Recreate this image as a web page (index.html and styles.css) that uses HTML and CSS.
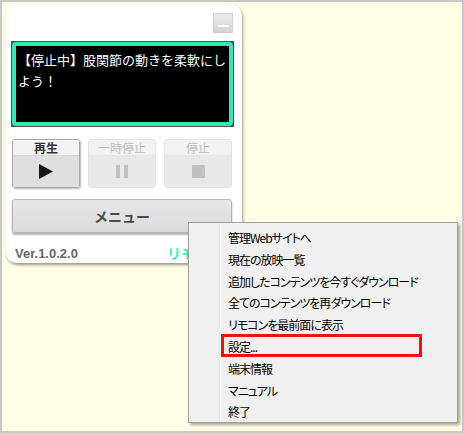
FILE: index.html
```html
<!DOCTYPE html>
<html lang="ja">
<head>
<meta charset="utf-8">
<link rel="stylesheet" href="styles.css">
</head>
<body>
<div class="screen">
  <div class="remote">
    <div class="titlebar">
      <div class="min-btn"><span class="min-bar"></span></div>
    </div>
    <div class="display">
      <div class="display-inner">【停止中】股関節の動きを柔軟にしよう！</div>
    </div>
    <div class="controls">
      <div class="ctl ctl-on">
        <div class="ctl-label">再生</div>
        <div class="ctl-icon">
          <svg width="14" height="15" viewBox="0 0 14 15"><polygon points="0,0 14,7.5 0,15" fill="#161616"/></svg>
        </div>
      </div>
      <div class="ctl ctl-off">
        <div class="ctl-label">一時停止</div>
        <div class="ctl-icon">
          <svg width="12" height="13" viewBox="0 0 12 13"><rect x="0" y="0" width="4" height="13" fill="#c0c0c0"/><rect x="8" y="0" width="4" height="13" fill="#c0c0c0"/></svg>
        </div>
      </div>
      <div class="ctl ctl-off">
        <div class="ctl-label">停止</div>
        <div class="ctl-icon">
          <svg width="13" height="13" viewBox="0 0 13 13"><rect x="0" y="0" width="13" height="13" fill="#c0c0c0"/></svg>
        </div>
      </div>
    </div>
    <div class="menu-btn">メニュー</div>
    <div class="footer">
      <span class="ver">Ver.1.0.2.0</span>
      <span class="brand">リモコン</span>
    </div>
  </div>

  <div class="ctx">
    <div class="ctx-item">管理Webサイトへ</div>
    <div class="ctx-item">現在の放映一覧</div>
    <div class="ctx-item">追加したコンテンツを今すぐダウンロード</div>
    <div class="ctx-item">全てのコンテンツを再ダウンロード</div>
    <div class="ctx-item">リモコンを最前面に表示</div>
    <div class="ctx-item ctx-marked">設定...<span class="mark"></span></div>
    <div class="ctx-item">端末情報</div>
    <div class="ctx-item">マニュアル</div>
    <div class="ctx-item">終了</div>
  </div>
</div>
</body>
</html>
```

FILE: styles.css
```css
html, body {
  margin: 0;
  padding: 0;
}

body {
  font-family: "Noto Sans CJK JP", "Noto Sans", sans-serif;
  width: 464px;
  height: 433px;
  overflow: hidden;
}

.screen {
  position: relative;
  box-sizing: border-box;
  width: 464px;
  height: 433px;
  border: 2px solid #c8c8c8;
  background: #fefee6;
  padding: 3px 0 0 4px;
}

.remote {
  box-sizing: border-box;
  width: 236px;
  height: 258px;
  background: #ffffff;
  border-radius: 10px;
  box-shadow: 1px 2px 3px rgba(0, 0, 0, 0.4);
  padding: 8px 8px 0 5px;
  display: flex;
  flex-direction: column;
}

.titlebar {
  display: flex;
  justify-content: flex-end;
  height: 20px;
  padding-right: 1px;
}

.min-btn {
  box-sizing: border-box;
  width: 20px;
  height: 20px;
  border: 1px solid #cfcfcf;
  background: linear-gradient(#ececec, #d3d3d3);
  display: flex;
  justify-content: center;
  align-items: flex-end;
  padding-bottom: 5px;
}

.min-bar {
  display: block;
  width: 11px;
  height: 2px;
  background: #ffffff;
}

.display {
  margin-top: 8px;
  height: 86px;
  background: #505050;
  padding: 1px;
  box-sizing: border-box;
}

.display-inner {
  box-sizing: border-box;
  height: 100%;
  border: 4px solid #2ee9b2;
  border-radius: 4px;
  background: #000000;
  color: #ffffff;
  font-size: 13px;
  line-height: 21px;
  padding: 3px 2px 0 2px;
}

.controls {
  margin: 12px 2px 0 1px;
  display: grid;
  grid-template-columns: 1fr 1fr 1fr;
  gap: 8px;
  height: 49px;
}

.ctl {
  box-sizing: border-box;
  border-radius: 3px;
  display: flex;
  flex-direction: column;
  overflow: hidden;
}

.ctl-label {
  height: 15px;
  font-size: 12px;
  line-height: 15px;
  text-align: center;
  font-weight: bold;
}

.ctl-icon {
  flex: 1;
  display: flex;
  align-items: center;
  justify-content: center;
  padding-bottom: 1px;
}

.ctl-on {
  border: 1px solid #a8a8a8;
  box-shadow: 1px 1px 2px rgba(0, 0, 0, 0.3);
}

.ctl-on .ctl-label {
  background: #f3f3f3;
  color: #333333;
  border-bottom: 1px solid #d6d6d6;
}

.ctl-on .ctl-icon {
  background: #dfdfdf;
}

.ctl-off {
  border: 1px solid #e2e2e2;
}

.ctl-off .ctl-label {
  background: #f2f2f2;
  color: #bdbdbd;
  font-weight: normal;
  border-bottom: 1px solid #e6e6e6;
}

.ctl-off .ctl-icon {
  background: #e8e8e8;
}

.menu-btn {
  margin: 11px 2px 0 1px;
  box-sizing: border-box;
  height: 34px;
  border: 1px solid #b4b4b4;
  border-radius: 3px;
  background: linear-gradient(#e6e6e6, #dcdcdc);
  box-shadow: 0 2px 2px rgba(0, 0, 0, 0.3);
  font-size: 14px;
  line-height: 32px;
  text-align: center;
  color: #4a4a4a;
  font-weight: bold;
}

.footer {
  margin-top: 10px;
  height: 20px;
  display: flex;
  align-items: center;
  padding-left: 4px;
  white-space: nowrap;
}

.ver {
  font-family: "Liberation Sans", Arial, sans-serif;
  font-weight: bold;
  font-size: 13px;
  color: #666666;
  width: 152px;
}

.brand {
  font-weight: bold;
  font-size: 14px;
  color: #36efc4;
}

.ctx {
  position: absolute;
  left: 186px;
  top: 220px;
  box-sizing: border-box;
  width: 270px;
  height: 201px;
  border: 1px solid #a0a0a0;
  background: linear-gradient(to right, #f0f0f0 30px, #e2e2e2 30px, #e2e2e2 31px, #ffffff 31px, #ffffff 32px, #f0f0f0 32px);
  box-shadow: 2px 2px 3px rgba(0, 0, 0, 0.35);
  padding: 4px 0 0 39px;
}

.ctx-item {
  position: relative;
  height: 21.8px;
  line-height: 21.8px;
  font-size: 12px;
  letter-spacing: -1px;
  color: #000000;
  white-space: nowrap;
  font-feature-settings: "palt";
}

.mark {
  position: absolute;
  left: -7px;
  top: -2px;
  width: 201px;
  height: 23px;
  box-sizing: border-box;
  border: 3px solid #ee1111;
}
```
